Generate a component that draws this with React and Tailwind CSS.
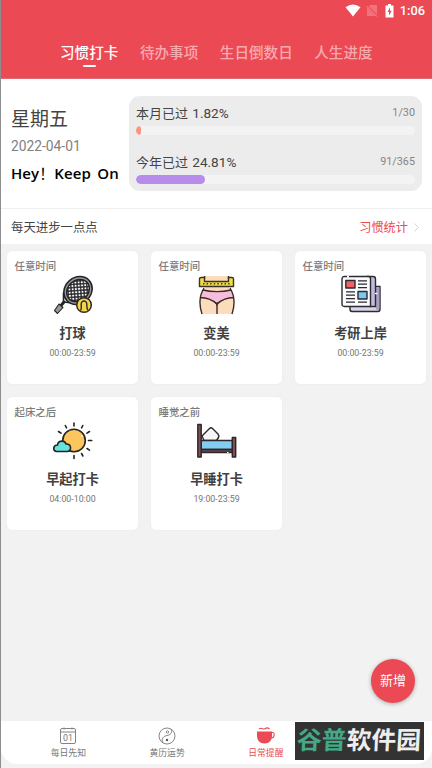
import React from 'react';
import { ChevronRight } from 'lucide-react';

const tabs = ['习惯打卡', '待办事项', '生日倒数日', '人生进度'];

const RacketIcon = () => (
  <svg viewBox="0 0 40 40" className="w-10 h-10" fill="none">
    <defs>
      <pattern id="strings" width="3.200" height="3.200" patternUnits="userSpaceOnUse" patternTransform="rotate(38)">
        <rect width="3.200" height="3.200" fill="#2b2b2e" />
        <circle cx="1.600" cy="1.600" r="1.050" fill="#fff" />
      </pattern>
    </defs>
    <g stroke="#252528" strokeLinecap="round" strokeLinejoin="round">
      <path d="M10.500 18v9M10.500 27l9 1" strokeWidth="1.600" />
      <path d="M11 27l-3 3.500" strokeWidth="3" />
      <path d="M1.500 35.500l4.500-6.500 4 3.500-5.500 6z" fill="#98989c" strokeWidth="1.100" />
      <ellipse cx="25" cy="15.500" rx="15" ry="13" transform="rotate(-42 25 15.500)" fill="#9a9a9e" strokeWidth="1.600" />
      <ellipse cx="25" cy="15.500" rx="12.200" ry="10.200" transform="rotate(-42 25 15.500)" fill="url(#strings)" strokeWidth="1.400" />
    </g>
    <circle cx="31" cy="30" r="7.300" fill="#f5d447" stroke="#2b2828" strokeWidth="1.500" />
    <path d="M27.500 35.500c1.800-2 0-5.500 1-8 1-2 4-2 5 0 1 2.500-.5 6 1.500 7.500" stroke="#2b2828" strokeWidth="1.400" />
  </svg>
);

const WaistIcon = () => (
  <svg viewBox="0 0 40 40" className="w-10 h-10" fill="none">
    <path d="M7.500 1l1 12C3 20 2 28 5 39h30c3-11 2-19-3-26l-.5-12z" fill="#fbdcbd" />
    <path d="M6 15c8 2 20 2 28 0l2.500 7.500c-7 0-13 3-16.500 7.500-4-4.500-9-7.500-16.500-7.500z" fill="#f9bddc" />
    <path d="M7.500 1v3M31.500 1v3M7 13C2 21 2 30 5 39M33 13c5 8 5 17 2 26M6 15c8 2 20 2 28 0M3.500 22.500C11 22.500 16 25.500 20 29c4-3.500 9-6.500 16.500-6.500M20 29v10" stroke="#3a2926" strokeWidth="1.400" />
    <path d="M17.800 27.500h4.400L20 31z" fill="#3a2926" />
    <path d="M2.500 4q0-1.500 1.500-1.500h3.500v4H31.500v-4H35q1.500 0 1.500 1.500v7.500h-34z" fill="#f2dc45" stroke="#39322a" strokeWidth="1.400" strokeLinejoin="round" />
    <path d="M6 8.800h28" stroke="#39322a" strokeWidth="1.400" strokeDasharray="1.400 2.200" />
  </svg>
);

const NewsIcon = () => (
  <svg viewBox="0 0 40 40" className="w-10 h-10" fill="none" stroke="#2d2a32" strokeWidth="1.400" strokeLinejoin="round">
    <path d="M9 30v4q0 2.500 2 2.500h26q2 0 2-2.500V11.500h-7V31z" fill="#d9d5e7" />
    <path d="M34.500 12.200h3.800V32q0 3.500-1.800 3.500-2-1-2-3.500z" fill="#a9a0c4" stroke="none" />
    <path d="M26 1.500h6q2.500 0 2.500 2.500v27.500H29z" fill="#c2bbd8" />
    <path d="M1 4q0-2.500 2.500-2.500h24q2 0 2 2.500v27.500h-26Q1 31.500 1 29z" fill="#fbfafd" />
    <path d="M6 1.500h2" stroke="#fff" strokeWidth="1.800" />
    <path d="M4.800 5.500h9.200v7.500H4.800z" fill="#ef6268" />
    <path d="M17 16.500h9v7.500h-9z" fill="#7bc9f0" />
    <path d="M17 5.800h9M17 9.200h9M17 12.700h9M5 16.800h9M5 20.200h9M5 23.700h9M5 27.200h9M17 27.200h9" strokeWidth="1.200" />
    <path d="M34 18.500h2.500" stroke="#fff" />
  </svg>
);

const SunIcon = () => (
  <svg viewBox="0 0 40 40" className="w-10 h-10" fill="none" stroke="#242424" strokeWidth="1.600" strokeLinecap="round">
    <circle cx="21" cy="19.500" r="11.300" fill="#fcc55e" />
    <path d="M21 2v3M12.300 4.500l1.200 2.300M29.800 4.500l-1.200 2.300M5.500 10.500l2.500 1.700M36.500 10.500L34 12.200M35.500 19.500h3.300M34 27.500l2.500 1.600M28.500 32.500l1.400 2.500M21 34.500v3" />
    <path d="M3.500 30.500c-4-.5-3.500-6.500 1-6.500.5-5 7.300-5 8.500-1 5.500-.5 6 7 1.500 7.500z" fill="#68e3dc" />
    <path d="M28.500 14.500l.8 1" stroke="#fff" strokeWidth="1.200" />
  </svg>
);

const BedIcon = () => (
  <svg viewBox="0 0 40 40" className="w-10 h-10" fill="none" stroke="#2d2529" strokeWidth="1.400" strokeLinejoin="round">
    <path d="M5 15l7.500-7.500q1.500-1.300 3 0l5.500 5.500q1.500 2 .5 3.500L19.500 19.500H7z" fill="#f7f7f9" />
    <path d="M4 19.500h31.500v9H4z" fill="#82cdf3" />
    <path d="M4 28.500h31.500v3H4z" fill="#66474b" />
    <path d="M.8 3.500h3.400V36H.8zM35.300 16.500h3.400V36h-3.400z" fill="#80504f" />
    <path d="M30 31.500h1.500" stroke="#fff" strokeWidth="1" />
  </svg>
);

const habits = [
  { when: '任意时间', name: '打球', time: '00:00-23:59', Icon: RacketIcon },
  { when: '任意时间', name: '变美', time: '00:00-23:59', Icon: WaistIcon },
  { when: '任意时间', name: '考研上岸', time: '00:00-23:59', Icon: NewsIcon },
  { when: '起床之后', name: '早起打卡', time: '04:00-10:00', Icon: SunIcon },
  { when: '睡觉之前', name: '早睡打卡', time: '19:00-23:59', Icon: BedIcon },
];

const StatusBar = () => (
  <div className="flex h-[21px] items-center justify-end pr-[7px] text-white">
    <svg viewBox="0 0 16 13" className="w-4 h-[13px] mr-[5px]">
      <path d="M.5 3.300Q8-2.500 15.500 3.300L8 12.500z" fill="currentColor" />
    </svg>
    <svg viewBox="0 0 12 13" className="w-3 h-[13px] mr-[7px]">
      <path d="M4 1h7v11H1V4z" fill="#f2737c" />
      <path d="M0 1l11.500 11.500" stroke="#eb4954" strokeWidth="2" />
      <path d="M.5 2l10.500 10.500" stroke="#f58c93" />
    </svg>
    <svg viewBox="0 0 9 14" className="w-[9px] h-3.5 mr-1.5">
      <path d="M3 0h3v1.500h2.500V13.500H.5V1.500H3z" fill="currentColor" />
      <path d="M5 3.500L2.500 8H4v3.500L6.700 6.800H5z" fill="#eb4954" />
    </svg>
    <span className="pt-px text-[12.8px] font-medium leading-none">1:06</span>
  </div>
);

const Progress = ({ label, percent, count, color, className }) => (
  <div className={className}>
    <div className="flex h-5 items-center justify-between pt-px">
      <span className="text-[13px] text-[#444]">
        {label} <span className="ml-px text-[13.6px]">{percent}%</span>
      </span>
      <span className="text-[10.8px] text-[#858585]">{count}</span>
    </div>
    <div className="mt-[3px] h-[9px] rounded-full bg-[#f3f3f3] overflow-hidden">
      <div className={`h-full rounded-full ${color}`} style={{ width: `${percent}%` }} />
    </div>
  </div>
);

const HabitCard = ({ when, name, time, Icon }) => (
  <div className="flex h-[133px] flex-col items-center rounded-[5px] bg-white shadow-[0_0_2px_rgba(0,0,0,0.06)]">
    <p className="mt-[7px] h-4 self-start pl-[7.5px] pt-px text-[10.4px] font-medium leading-4 text-[#7b7b7b]">{when}</p>
    <div className="mt-px"><Icon /></div>
    <h3 className="mt-[9px] text-[13.2px] font-bold leading-5 text-[#414141]">{name}</h3>
    <p className="mt-px text-[8.8px] leading-4 text-[#757575]">{time}</p>
  </div>
);

const CalendarIcon = () => (
  <svg viewBox="0 0 18 18" className="w-[18px] h-[18px]" fill="none" stroke="#848484">
    <rect x="1.500" y="1.500" width="15" height="15" rx="1.500" />
    <path d="M1.500 5h15M5 .5v2M13 .5v2" />
    <text x="9" y="14.300" textAnchor="middle" fontSize="8.800" fill="#777" stroke="none">01</text>
  </svg>
);

const YinYangIcon = () => (
  <svg viewBox="0 0 18 18" className="w-[18px] h-[18px]" fill="none" stroke="#777">
    <circle cx="9" cy="9" r="8" strokeWidth=".9" />
    <path d="M13 2.200C15 6 12 8 9 8.500s-6.500 3-4 7.300" strokeWidth=".9" />
    <circle cx="9.500" cy="5" r="1.200" strokeWidth=".8" />
    <circle cx="9" cy="13" r="1.200" fill="#555" stroke="none" />
  </svg>
);

const CupIcon = () => (
  <svg viewBox="0 0 18 18" className="w-[18px] h-[18px]" fill="none" stroke="#eb4954">
    <path d="M0 4.500h15v4c0 5-3 8-7.500 8S0 13.500 0 8.500z" fill="#eb4954" stroke="none" />
    <path d="M14.500 5.500h1.300c2.200 0 2 5.500-2.100 5.700M2 2C5-.5 6 3.500 8.500 1.500 10 .2 11 .7 12.500 2" strokeWidth="1.100" />
  </svg>
);

const NavItem = ({ label, icon, active }) => (
  <div className={`flex flex-1 flex-col items-center pt-1.5 text-[8.8px] ${active ? 'text-[#eb4954]' : 'text-[#777]'}`}>
    <div className="h-[18px]">{icon}</div>
    <span className="mt-[2px] leading-3">{label}</span>
  </div>
);

const App = () => {
  return (
    <div className="relative flex h-[768px] w-[432px] flex-col overflow-hidden border-l border-[#8e8e8e] bg-[#f2f2f2] font-[Roboto,'Noto_Sans_CJK_SC',sans-serif]">
      <header className="h-[79px] shrink-0 border-b border-[#e06a72] bg-[#eb4954]">
        <StatusBar />
        <nav className="mt-[21px] flex gap-[21.5px] pl-[59px] text-[14.6px] font-medium leading-[22px] text-[#f8a9ae]">
          {tabs.map((tab, i) => (
            <div key={tab} className={i === 0 ? 'flex flex-col items-center text-white' : ''}>
              {tab}
              {i === 0 && <span className="mt-px h-[2px] w-[13px] rounded-full bg-white" />}
            </div>
          ))}
        </nav>
      </header>

      <section className="flex h-[130px] shrink-0 border-b border-[#efefef] bg-white pl-2.5 pt-[17px]">
        <div className="w-[118px] whitespace-nowrap pt-2.5">
          <h1 className="text-[19px] leading-7 text-[#444]">星期五</h1>
          <p className="mt-0.5 text-[13.8px] leading-5 text-[#808080]">2022-04-01</p>
          <p className="mt-[7px] flex text-[15px] font-semibold leading-5 tracking-[0.1px] text-black font-['Open_Sans','Noto_Sans_CJK_SC',sans-serif]">
            Hey<span className="w-[15px] font-normal">！</span>
            <span className="[word-spacing:2.5px]">Keep On</span>
          </p>
        </div>
        <div className="h-[94.5px] w-[293px] rounded-[11px] bg-[#ececec] px-[7px] pt-[7px]">
          <Progress label="本月已过" percent={1.82} count="1/30" color="bg-[#f79781]" />
          <Progress label="今年已过" percent={24.81} count="91/365" color="bg-[#b78ceb]" className="mt-[17px]" />
        </div>
      </section>

      <section className="flex h-[35px] shrink-0 items-center justify-between bg-white pl-2.5 pr-[9px] pt-[3px] text-[12.4px]">
        <span className="text-[#444]">每天进步一点点</span>
        <span className="flex items-center text-[12.2px] text-[#eb4954]">
          习惯统计
          <ChevronRight className="ml-px w-[15px] h-[15px] -mr-px text-[#d4d4d4]" strokeWidth={1.6} />
        </span>
      </section>

      <main className="grid flex-1 grid-cols-3 content-start gap-[13px] px-1.5 pt-[7px]">
        {habits.map((habit) => (
          <HabitCard key={habit.name} {...habit} />
        ))}
      </main>

      <footer className="mb-1 flex h-[43px] shrink-0 rounded-b-2xl bg-white pl-[18px] pr-[18px]">
        <NavItem label="每日先知" icon={<CalendarIcon />} />
        <NavItem label="黄历运势" icon={<YinYangIcon />} />
        <NavItem label="日常提醒" icon={<CupIcon />} active />
        <NavItem label="我的" />
      </footer>

      <button className="absolute right-[17px] top-[659px] h-11 w-11 rounded-full bg-[#eb4954] text-[13px] text-white shadow-[0_1px_4px_rgba(0,0,0,0.3)]">
        新增
      </button>

      {/* Logo plate */}
      <div className="absolute left-[294px] top-[722px] flex h-[38px] w-[129px] items-center justify-center bg-[#333]">
        <span className="-skew-x-3 whitespace-nowrap pt-px text-[24.8px] font-bold leading-none text-[#eee]">
          <span className="text-[#43a987]">谷普</span>软件园
        </span>
      </div>
    </div>
  );
};

export default App;
